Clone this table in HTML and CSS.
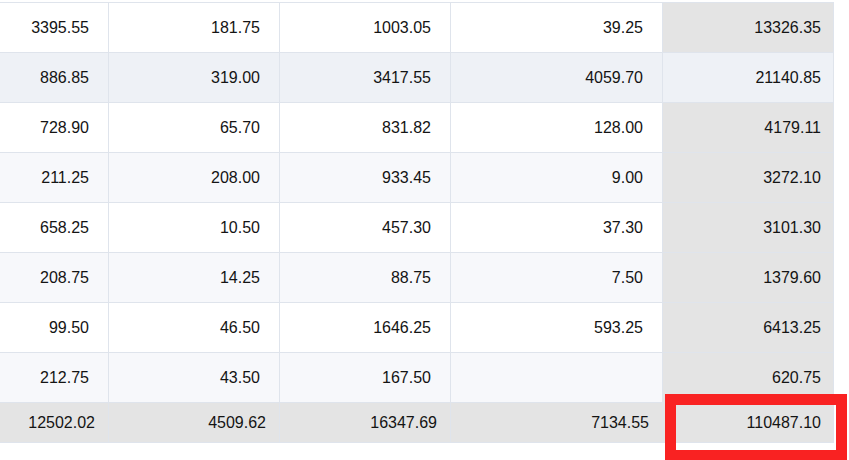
FILE: index.html
```html
<!DOCTYPE html>
<html>
<head>
<meta charset="utf-8">
<link rel="stylesheet" href="styles.css">
</head>
<body>
<div class="wrap">
  <div class="grid">
    <div class="row">
      <div class="cell c1">3395.55</div><div class="cell c2">181.75</div><div class="cell c3">1003.05</div><div class="cell c4">39.25</div><div class="cell c5 sum">13326.35</div>
    </div>
    <div class="row hover">
      <div class="cell c1">886.85</div><div class="cell c2">319.00</div><div class="cell c3">3417.55</div><div class="cell c4">4059.70</div><div class="cell c5 sum">21140.85</div>
    </div>
    <div class="row">
      <div class="cell c1">728.90</div><div class="cell c2">65.70</div><div class="cell c3">831.82</div><div class="cell c4">128.00</div><div class="cell c5 sum">4179.11</div>
    </div>
    <div class="row stripe">
      <div class="cell c1">211.25</div><div class="cell c2">208.00</div><div class="cell c3">933.45</div><div class="cell c4">9.00</div><div class="cell c5 sum">3272.10</div>
    </div>
    <div class="row">
      <div class="cell c1">658.25</div><div class="cell c2">10.50</div><div class="cell c3">457.30</div><div class="cell c4">37.30</div><div class="cell c5 sum">3101.30</div>
    </div>
    <div class="row stripe">
      <div class="cell c1">208.75</div><div class="cell c2">14.25</div><div class="cell c3">88.75</div><div class="cell c4">7.50</div><div class="cell c5 sum">1379.60</div>
    </div>
    <div class="row">
      <div class="cell c1">99.50</div><div class="cell c2">46.50</div><div class="cell c3">1646.25</div><div class="cell c4">593.25</div><div class="cell c5 sum">6413.25</div>
    </div>
    <div class="row stripe">
      <div class="cell c1">212.75</div><div class="cell c2">43.50</div><div class="cell c3">167.50</div><div class="cell c4"></div><div class="cell c5 sum">620.75</div>
    </div>
    <div class="row total">
      <div class="cell c1">12502.02</div><div class="cell c2">4509.62</div><div class="cell c3">16347.69</div><div class="cell c4">7134.55</div><div class="cell c5">110487.10</div>
    </div>
  </div>
  <div class="highlight"></div>
</div>
</body>
</html>
```

FILE: styles.css
```css
html, body {
  margin: 0;
  padding: 0;
  background: #ffffff;
}

body {
  font-family: "Liberation Sans", Arial, Helvetica, sans-serif;
  font-size: 16px;
  color: #141414;
}

.wrap {
  position: relative;
  padding-top: 2px;
  height: 458px;
  overflow: hidden;
}

.grid {
  display: flex;
  flex-direction: column;
  width: 834px;
  border-top: 1px solid #dfe4ec;
}

.row {
  display: flex;
  height: 50px;
  background: #ffffff;
}

.row.stripe {
  background: #f7f8fb;
}

.row.hover {
  background: #eef1f6;
}

.cell {
  box-sizing: border-box;
  height: 100%;
  display: flex;
  align-items: center;
  justify-content: flex-end;
  padding-right: 19px;
  border-right: 1px solid #dfe4ec;
  border-bottom: 1px solid #dfe4ec;
  white-space: nowrap;
}

.c1 { width: 109px; }
.c2 { width: 171px; }
.c3 { width: 171px; }
.c4 { width: 212px; }
.c5 { width: 171px; padding-right: 12px; }

.cell.sum {
  background: #e4e4e4;
}

.row.hover .cell.sum {
  background: #eef1f6;
}

.row.total {
  height: 40px;
  background: #e4e4e4;
}

.row.total .cell {
  padding-right: 13px;
}

.row.total .c5 {
  padding-right: 12px;
}

.highlight {
  position: absolute;
  left: 665px;
  top: 394px;
  width: 182px;
  height: 67px;
  box-sizing: border-box;
  border: 11px solid #f92222;
}
```
